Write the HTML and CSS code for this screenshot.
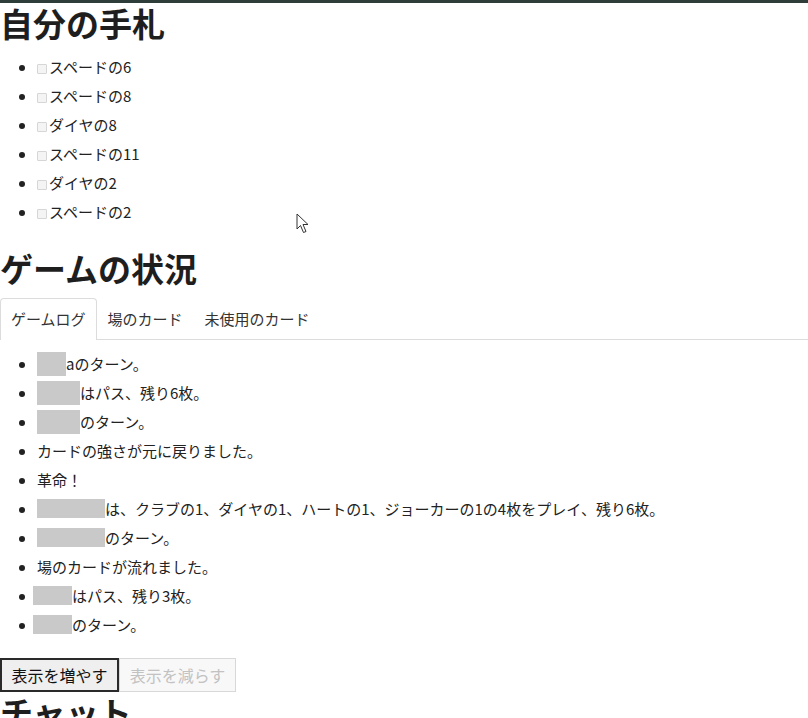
FILE: index.html
```html
<!DOCTYPE html>
<html lang="ja">
<head>
    <meta charset="UTF-8">
    <meta name="viewport" content="width=device-width, initial-scale=1.0">
    <title>大富豪</title>
    <link rel="stylesheet" href="styles.css">
</head>
<body>
    <div class="top-bar"></div>

    <h2>自分の手札</h2>
    <ul class="hand">
        <li><span class="check"></span>スペードの6</li>
        <li><span class="check"></span>スペードの8</li>
        <li><span class="check"></span>ダイヤの8</li>
        <li><span class="check"></span>スペードの11</li>
        <li><span class="check"></span>ダイヤの2</li>
        <li><span class="check"></span>スペードの2</li>
    </ul>

    <h2>ゲームの状況</h2>
    <div class="tabs">
        <div class="tab active">ゲームログ</div>
        <div class="tab">場のカード</div>
        <div class="tab">未使用のカード</div>
    </div>

    <ul class="log">
        <li><span class="name w29 tall"></span>aのターン。</li>
        <li><span class="name w43 tall"></span>はパス、残り6枚。</li>
        <li><span class="name w43 tall"></span>のターン。</li>
        <li>カードの強さが元に戻りました。</li>
        <li>革命！</li>
        <li><span class="name w68"></span>は、クラブの1、ダイヤの1、ハートの1、ジョーカーの1の4枚をプレイ、残り6枚。</li>
        <li><span class="name w68"></span>のターン。</li>
        <li>場のカードが流れました。</li>
        <li><span class="name w39 shift"></span>はパス、残り3枚。</li>
        <li><span class="name w39 shift"></span>のターン。</li>
    </ul>

    <div class="buttons">
        <button class="btn focus">表示を増やす</button>
        <button class="btn" disabled>表示を減らす</button>
    </div>

    <h2 class="chat">チャット</h2>

    <svg class="cursor" width="14" height="22" viewBox="0 0 14 22">
        <path d="M1 1 L1 16 L4.5 12.5 L7.5 19.5 L10 18.5 L7 11.5 L12 11.5 Z" fill="#fff" stroke="#333" stroke-width="1"/>
    </svg>
</body>
</html>
```

FILE: styles.css
```css
body {
    margin: 0;
    font-family: "Noto Sans CJK JP", "Noto Sans", sans-serif;
    font-size: 15px;
    color: #222;
    background: #fff;
    position: relative;
}

.top-bar {
    height: 3px;
    background-color: #2e3d3a;
}

h2 {
    margin: 0;
    font-size: 33px;
    line-height: 40px;
    font-weight: 700;
    color: #1e1e1e;
}

ul {
    margin: 9px 0 0;
    padding-left: 37px;
    list-style: disc;
}

li {
    line-height: 29px;
}

.hand {
    margin-bottom: 22px;
}

.check {
    display: inline-block;
    width: 8px;
    height: 8px;
    border: 1px solid #d6d6d6;
    background-color: #f4f4f4;
    border-radius: 1px;
    margin-right: 2px;
    vertical-align: -1px;
}

/* タブ */
.tabs {
    display: flex;
    margin-top: 10px;
    border-bottom: 1px solid #dcdcdc;
}

.tab {
    padding: 0 10px;
    height: 40px;
    line-height: 40px;
    color: #333;
    border: 1px solid transparent;
    border-bottom: none;
    margin-bottom: -1px;
}

.tab.active {
    border-color: #dcdcdc;
    border-radius: 4px 4px 0 0;
    background: #fff;
    height: 41px;
}

.log {
    margin-top: 9px;
}

/* 名前の塗りつぶし */
.name {
    display: inline-block;
    height: 19px;
    background-color: #c9c9c9;
    vertical-align: -3px;
}

.name.tall {
    height: 24px;
    vertical-align: -6px;
}

.name.shift {
    margin-left: -4px;
}

.w29 { width: 29px; }
.w39 { width: 39px; }
.w43 { width: 43px; }
.w68 { width: 68px; }

.buttons {
    display: flex;
    margin-top: 19px;
}

.btn {
    font-family: inherit;
    font-size: 16px;
    height: 34px;
    padding: 0 9px;
    color: #111;
    background-color: #efefef;
    border: 1px solid #bbb;
}

.btn.focus {
    border: 2px solid #2a2a2a;
    width: 119px;
}

.btn:disabled {
    color: #c2c2c2;
    background-color: #f8f8f8;
    border-color: #d8d8d8;
    width: 117px;
}

.chat {
    margin-top: 0;
}

.cursor {
    position: absolute;
    left: 296px;
    top: 213px;
}
```
